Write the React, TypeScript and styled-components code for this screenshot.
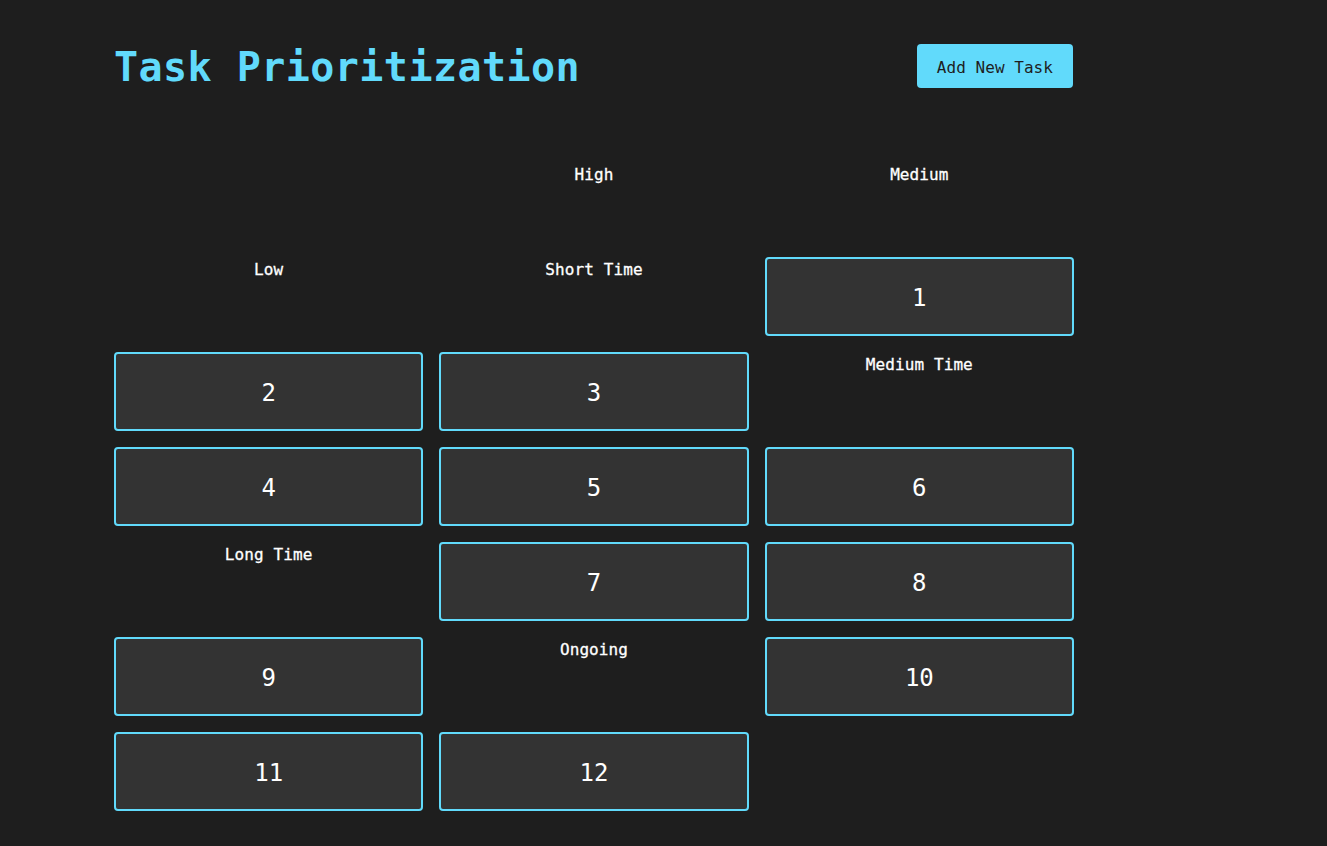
import React from "react";
import styled, { createGlobalStyle } from "styled-components";

const GlobalStyle = createGlobalStyle`
  html, body {
    margin: 0;
    padding: 0;
    background: #1e1e1e;
  }
  body {
    font-family: "DejaVu Sans Mono", "Liberation Mono", monospace;
    color: #ffffff;
  }
`;

const Page = styled.div`
  min-height: 846px;
  background: #1e1e1e;
  padding: 44px 0 0 114px;
  box-sizing: border-box;
`;

const Container = styled.div`
  width: 960px;
`;

const Header = styled.header`
  display: flex;
  align-items: center;
  justify-content: space-between;
  height: 44px;
`;

const Title = styled.h1`
  margin: 0;
  font-family: "DejaVu Sans Mono", monospace;
  font-size: 40px;
  font-weight: bold;
  letter-spacing: 0.45px;
  color: #61dafb;
  line-height: 44px;
  padding-top: 2px;
`;

const AddButton = styled.button`
  height: 44px;
  padding: 0 20px;
  margin-right: 1px;
  background: #61dafb;
  color: #1e1e1e;
  border: none;
  border-radius: 4px;
  font-family: "DejaVu Sans Mono", monospace;
  font-size: 16px;
  letter-spacing: 0.05px;
  padding-top: 2px;
  cursor: pointer;
`;

const Grid = styled.div`
  margin-top: 74px;
  display: grid;
  grid-template-columns: repeat(3, 1fr);
  grid-auto-rows: 79px;
  column-gap: 16px;
  row-gap: 16px;
`;

const Label = styled.div`
  display: flex;
  justify-content: center;
  align-items: flex-start;
  padding-top: 3px;
  font-size: 16px;
  letter-spacing: 0.1px;
  font-weight: 500;
  color: #ffffff;
  -webkit-text-stroke: 0.3px #ffffff;
`;

const TaskCard = styled.div`
  display: flex;
  align-items: center;
  justify-content: center;
  background: #333333;
  border: 2px solid #61dafb;
  border-radius: 4px;
  font-size: 24px;
  padding-top: 3px;
  color: #ffffff;
`;

type Cell = { kind: "label" | "task" | "empty"; text?: string };

const cells: Cell[] = [
  { kind: "empty" },
  { kind: "label", text: "High" },
  { kind: "label", text: "Medium" },
  { kind: "label", text: "Low" },
  { kind: "label", text: "Short Time" },
  { kind: "task", text: "1" },
  { kind: "task", text: "2" },
  { kind: "task", text: "3" },
  { kind: "label", text: "Medium Time" },
  { kind: "task", text: "4" },
  { kind: "task", text: "5" },
  { kind: "task", text: "6" },
  { kind: "label", text: "Long Time" },
  { kind: "task", text: "7" },
  { kind: "task", text: "8" },
  { kind: "task", text: "9" },
  { kind: "label", text: "Ongoing" },
  { kind: "task", text: "10" },
  { kind: "task", text: "11" },
  { kind: "task", text: "12" },
];

export default function App() {
  return (
    <>
      <GlobalStyle />
      <Page>
        <Container>
          <Header>
            <Title>Task Prioritization</Title>
            <AddButton>Add New Task</AddButton>
          </Header>
          <Grid>
            {cells.map((c, i) =>
              c.kind === "task" ? (
                <TaskCard key={i}>{c.text}</TaskCard>
              ) : c.kind === "label" ? (
                <Label key={i}>{c.text}</Label>
              ) : (
                <div key={i} />
              )
            )}
          </Grid>
        </Container>
      </Page>
    </>
  );
}
